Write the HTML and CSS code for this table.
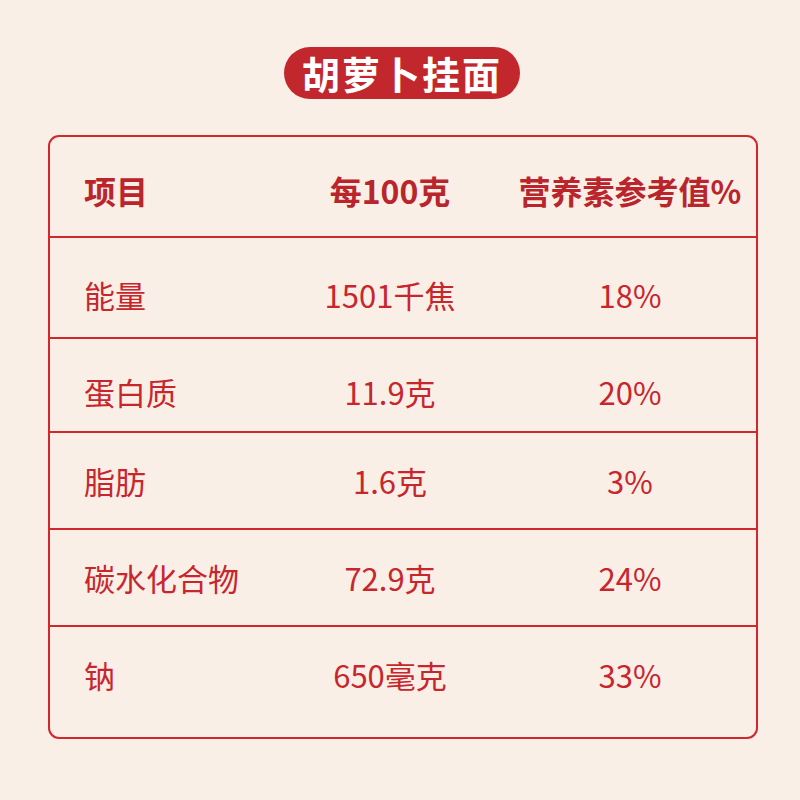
FILE: index.html
```html
<!DOCTYPE html>
<html lang="zh">
<head>
<meta charset="utf-8">
<title>胡萝卜挂面</title>
<link rel="stylesheet" href="styles.css">
</head>
<body>
<div class="page">
  <div class="title-wrap"><div class="pill">胡萝卜挂面</div></div>
  <div class="table">
    <div class="row head h1">
      <div class="c c1">项目</div><div class="c c2">每100克</div><div class="c c3">营养素参考值%</div>
    </div>
    <div class="row h2">
      <div class="c c1">能量</div><div class="c c2">1501千焦</div><div class="c c3">18%</div>
    </div>
    <div class="row h3">
      <div class="c c1">蛋白质</div><div class="c c2">11.9克</div><div class="c c3">20%</div>
    </div>
    <div class="row h4">
      <div class="c c1">脂肪</div><div class="c c2">1.6克</div><div class="c c3">3%</div>
    </div>
    <div class="row h5">
      <div class="c c1">碳水化合物</div><div class="c c2">72.9克</div><div class="c c3">24%</div>
    </div>
    <div class="row last h6">
      <div class="c c1">钠</div><div class="c c2">650毫克</div><div class="c c3">33%</div>
    </div>
  </div>
</div>
</body>
</html>
```
FILE: styles.css
```css
* { box-sizing: border-box; }
html, body { margin: 0; padding: 0; }
body {
  background: #f9efe6;
  font-family: "Noto Sans CJK SC", "Noto Sans", sans-serif;
  color: #c8262d;
}
.page {
  width: 800px;
  height: 800px;
  padding: 47px 42px 0 48px;
}
.title-wrap {
  display: flex;
  width: 710px;
}
.pill {
  margin-left: 236px;
  width: 236px;
  height: 52px;
  border-radius: 26px;
  background: #c1272d;
  color: #fff;
  font-weight: 700;
  font-size: 38px;
  letter-spacing: 2px;
  display: flex;
  align-items: center;
  justify-content: center;
  line-height: 1;
}
.table {
  margin-top: 36px;
  width: 710px;
  height: 604px;
  border: 2px solid #d1282e;
  border-radius: 11px;
  display: flex;
  flex-direction: column;
}
.row {
  display: grid;
  grid-template-columns: 226px 228px 1fr;
  align-items: center;
  border-bottom: 2px solid #d1282e;
}
.row.last { border-bottom: none; flex: 1; }
.h1 { height: 101px; padding-top: 6px; }
.h2 { height: 101px; padding-top: 14px; }
.h3 { height: 94px; padding-top: 12px; }
.h4 { height: 97px; }
.h5 { height: 97px; }
.h6 { padding-bottom: 16px; }
.c {
  font-size: 31px;
  line-height: 1;
  white-space: nowrap;
}
.c1 { padding-left: 34px; }
.c2, .c3 { text-align: center; }
.head .c { font-weight: 700; font-size: 32px; color: #b9252b; }
```
